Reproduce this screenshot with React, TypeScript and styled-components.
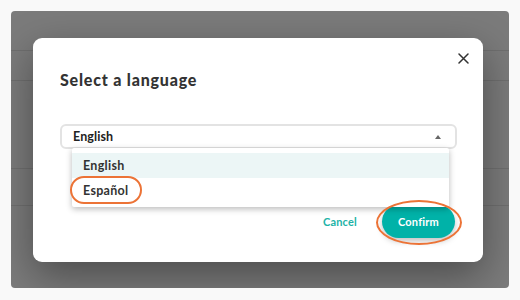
import { createGlobalStyle, styled } from 'styled-components';

const GlobalStyle = createGlobalStyle`
  body {
    margin: 0;
    background: #f9f9f9;
    font-family: Lato, "Noto Sans", sans-serif;
  }
`;

const languages = ['English', 'Español'];

const App = () => {
  return (
    <Page>
      <GlobalStyle />
      <Backdrop>
        <BackRow $h={39} />
        <BackRow $h={29} />
        <BackRow $h={87} />
        <BackRow $h={36} />
        <Modal>
          <CloseButton aria-label="Close">
            <svg width="11" height="11" viewBox="0 0 11 11">
              <path d="M1 1L10 10M10 1L1 10" stroke="#333" strokeWidth="1.5" strokeLinecap="round" />
            </svg>
          </CloseButton>
          <Title>Select a language</Title>
          <SelectWrap>
            <SelectBox>
              <span>English</span>
              <Caret />
            </SelectBox>
            <Menu>
              {languages.map((lang, i) => (
                <Option key={lang} $active={i === 0}>
                  <OptionLabel>
                    {lang}
                    {i === 1 && <Ring $inset="-7px -14px -6px -13px" $radius="14px" />}
                  </OptionLabel>
                </Option>
              ))}
            </Menu>
          </SelectWrap>
          <Actions>
            <CancelButton>Cancel</CancelButton>
            <ConfirmButton>
              Confirm
              <Ring $inset="-5px -7px -7px -6px" $radius="50%" />
            </ConfirmButton>
          </Actions>
        </Modal>
      </Backdrop>
    </Page>
  );
};

export default App;

const Page = styled.div`
  width: 520px;
  height: 300px;
  box-sizing: border-box;
  padding: 11px;
`;

const Backdrop = styled.div`
  position: relative;
  width: 498px;
  height: 277px;
  border-radius: 4px;
  background: #7b7b7b;
  overflow: hidden;
  display: flex;
  flex-direction: column;
`;

const BackRow = styled.div<{ $h: number }>`
  height: ${p => p.$h}px;
  flex-shrink: 0;
  border-bottom: 1px solid #6f6f6f;
`;

const Modal = styled.div`
  position: absolute;
  left: 22px;
  top: 27px;
  width: 450px;
  height: 224px;
  box-sizing: border-box;
  padding: 32px 26px 0 27px;
  background: #fff;
  border-radius: 9px;
  box-shadow: 0 14px 40px rgba(0, 0, 0, 0.38);
  display: flex;
  flex-direction: column;
`;

const CloseButton = styled.button`
  position: absolute;
  top: 14px;
  right: 14px;
  width: 12px;
  height: 12px;
  padding: 0;
  border: none;
  background: none;
  display: flex;
  align-items: center;
  justify-content: center;
`;

const Title = styled.h2`
  margin: 0;
  font-size: 16px;
  line-height: 20px;
  font-weight: 900;
  letter-spacing: 0.8px;
  color: #333;
`;

const SelectWrap = styled.div`
  position: relative;
  margin-top: 34px;
  z-index: 2;
`;

const SelectBox = styled.div`
  height: 25px;
  box-sizing: border-box;
  border: 2px solid #e3e3e3;
  border-radius: 6px;
  padding: 0 14px 0 11px;
  display: flex;
  align-items: center;
  justify-content: space-between;
  font-size: 12.5px;
  font-weight: 700;
  letter-spacing: 0.1px;
  color: #222;
`;

const Caret = styled.span`
  width: 0;
  height: 0;
  border-left: 3px solid transparent;
  border-right: 3px solid transparent;
  border-bottom: 4px solid #666;
`;

const Menu = styled.div`
  position: absolute;
  top: 24px;
  left: 12px;
  width: 377px;
  box-sizing: border-box;
  padding: 5px 0 4px;
  background: #fff;
  border-radius: 2px;
  box-shadow: 0 2px 6px rgba(0, 0, 0, 0.28);
`;

const Option = styled.div<{ $active?: boolean }>`
  height: 25px;
  padding-left: 11px;
  display: flex;
  align-items: center;
  font-size: 12.5px;
  font-weight: 700;
  letter-spacing: 0.3px;
  color: #333;
  background: ${p => (p.$active ? '#ecf6f6' : '#fff')};
`;

const OptionLabel = styled.span`
  position: relative;
  line-height: 15px;
`;

const Ring = styled.span<{ $inset: string; $radius: string }>`
  position: absolute;
  inset: ${p => p.$inset};
  border: 2px solid #ec7336;
  border-radius: ${p => p.$radius};
  pointer-events: none;
  z-index: 3;
`;

const Actions = styled.div`
  margin-top: 56px;
  display: flex;
  align-items: center;
  justify-content: flex-end;
  gap: 25px;
  padding-right: 2px;
`;

const CancelButton = styled.button`
  border: none;
  background: none;
  padding: 0;
  font-family: inherit;
  font-size: 11px;
  font-weight: 700;
  letter-spacing: 0.2px;
  color: #1db3a7;
`;

const ConfirmButton = styled.button`
  position: relative;
  width: 73px;
  height: 33px;
  border: none;
  border-radius: 17px;
  background: #00b2a8;
  box-shadow: 0 3px 6px rgba(0, 0, 0, 0.25);
  font-family: inherit;
  font-size: 11px;
  font-weight: 700;
  letter-spacing: 0.2px;
  color: #fff;
`;
